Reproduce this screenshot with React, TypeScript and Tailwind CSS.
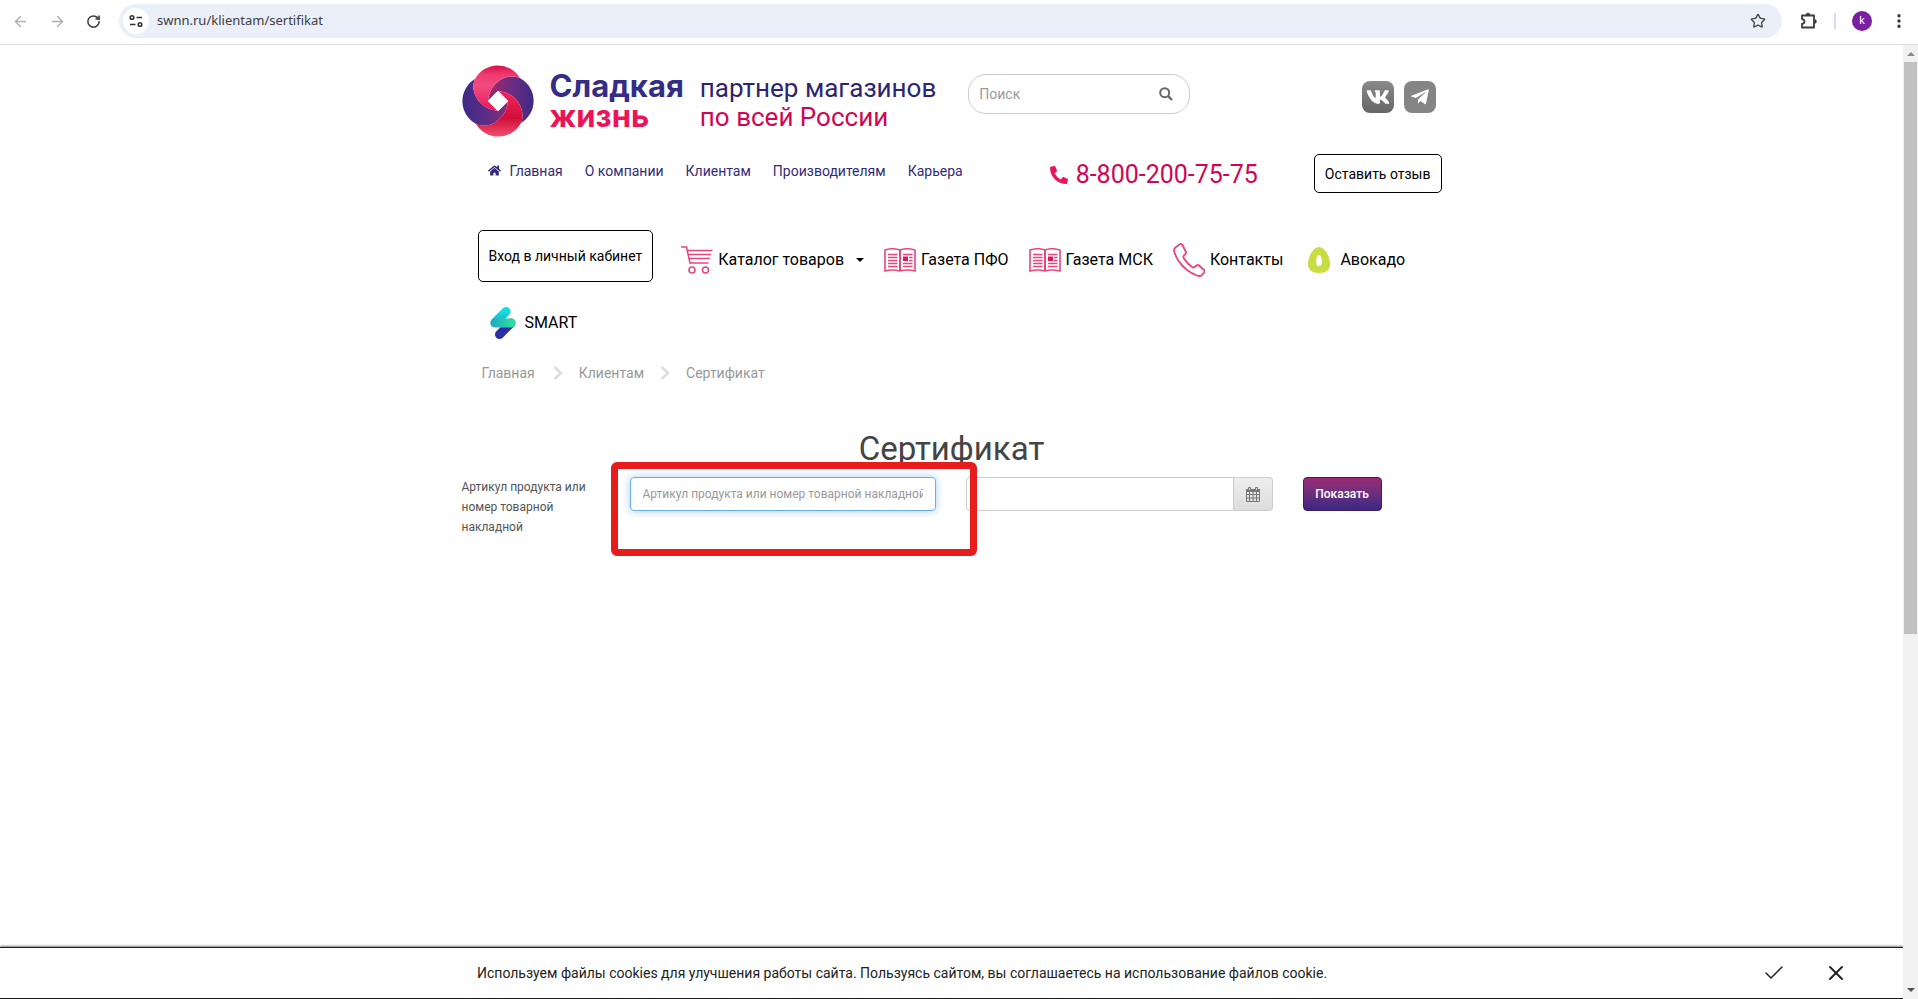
import React, { useState } from 'react';
import { ArrowLeft, ArrowRight, Check, MoreVertical, RotateCw, Star, X } from 'lucide-react';
import { FaHome, FaPhoneAlt, FaTelegramPlane, FaVk } from 'react-icons/fa';

const topLinks = ['О компании', 'Клиентам', 'Производителям', 'Карьера'];

// one petal, turned by 90° for each of the four colours
const petal = 'M78 109C82 50 140 22 175 40A78 78 0 0 1 177 176C195 141 167 83 108 79Z';

const LogoMark = () => (
  <svg viewBox="0 0 216 218" className="w-[72px] h-[72px]" aria-hidden="true">
    <defs>
      <linearGradient id="logoTop">
        <stop offset="0" stopColor="#ef1558" />
        <stop offset="0.55" stopColor="#f04c80" />
        <stop offset="0.8" stopColor="#ee3a70" />
        <stop offset="1" stopColor="#d80f4c" />
      </linearGradient>
      <linearGradient id="logoRight">
        <stop offset="0" stopColor="#a92668" />
        <stop offset="0.5" stopColor="#6d2c82" />
        <stop offset="1" stopColor="#3d2a85" />
      </linearGradient>
      <linearGradient id="logoBottom">
        <stop offset="0" stopColor="#f0245c" />
        <stop offset="0.3" stopColor="#e31a4c" />
        <stop offset="0.6" stopColor="#cf0f3a" />
        <stop offset="1" stopColor="#f0506f" />
      </linearGradient>
      <linearGradient id="logoLeft">
        <stop offset="0" stopColor="#8a2c7c" />
        <stop offset="0.5" stopColor="#5a2c86" />
        <stop offset="1" stopColor="#3d2a85" />
      </linearGradient>
    </defs>
    <path d={petal} fill="url(#logoRight)" />
    <path d={petal} fill="url(#logoBottom)" transform="rotate(90 108 109)" />
    <path d={petal} fill="url(#logoLeft)" transform="rotate(180 108 109)" />
    <path d={petal} fill="url(#logoTop)" transform="rotate(270 108 109)" />
    <path d="M108 78L139 109L108 140L77 109Z" fill="#fff" />
  </svg>
);

const SearchIcon = () => (
  <svg viewBox="0 0 14 14" className="w-[14px] h-[14px]" fill="none" stroke="#666" strokeWidth="2">
    <circle cx="5.7" cy="5.7" r="4.5" />
    <path d="M9 9L13 13" strokeWidth="2.4" />
  </svg>
);

const PuzzleIcon = () => (
  <svg viewBox="0 0 18 18" className="w-[18px] h-[18px]" fill="none" stroke="#3c3c3c" strokeWidth="1.8" strokeLinejoin="round">
    <path d="M2 3.500H14V15.500H2V12Q4.500 11.500 4.500 9.500T2 7Z" />
    <path d="M6 3Q6 1 8 1T10 3ZM14.500 7.500Q16.500 7.500 16.500 9.500T14.500 11.500Z" fill="#3c3c3c" strokeWidth="0.6" />
  </svg>
);

const CartIcon = () => (
  <svg viewBox="0 0 32 28" className="w-8 h-7" fill="none" stroke="#e8477c" strokeWidth="1.6">
    <path d="M0 1H5.5L9 17H27.5M31.500 4.500H6.500M7.500 8.500H30M8 12.500H29" />
    <circle cx="11" cy="24" r="3" />
    <circle cx="24.500" cy="24" r="3" />
  </svg>
);

const PaperIcon = () => (
  <svg viewBox="0 0 32 24" className="w-8 h-6" fill="none" stroke="#e8477c">
    <path d="M1 2Q9 -0.500 16 2Q23 -0.500 31 2V23Q23 21 16 23Q9 21 1 23Z" strokeWidth="1.600" />
    <path d="M16 2V23" strokeWidth="2" />
    <path
      d="M4 6.500H13.500M4 9.500H13.500M4 12.500H13.500M4 15.500H13.500M4 18.500H13.500M19 6.500H28.500M25 9.500H28.500M25 12.500H28.500M19 15.500H28.500M19 18.500H28.500"
      strokeWidth="1.4"
    />
    <path d="M19 8.500H24V13H19Z" fill="#e0165c" stroke="none" />
  </svg>
);

const ContactIcon = () => (
  <svg viewBox="0 0 32 34" className="w-8 h-[34px]" fill="none" stroke="#e8477c" strokeWidth="1.800">
    <path d="M3 4L7 1Q8.500 0.500 9.500 2L13 9Q13.500 10.500 12 11.500L10.500 13Q10 14 11 15.500Q14 20.500 19 24Q20.500 25 21.500 24L23.500 22.500Q25 21.500 26 22.500L31 27Q32 28 31 29.500L28.500 32.500Q27 33.500 24 32.500Q12 28 5 17Q1 10 1 7Q1 5.500 3 4Z" />
  </svg>
);

const AvocadoIcon = () => (
  <svg viewBox="0 0 22 28" className="w-[22px] h-7">
    <path d="M11 1C17 1 22 11 22 18C22 24 18 27 11 27S0 24 0 18C0 11 5 1 11 1Z" fill="#c9dd42" />
    <path d="M11 9C13 9 14 13 14 16C14 18.500 13 20 11 20S8 18.500 8 16C8 13 9 9 11 9Z" fill="#fff" />
  </svg>
);

const SmartIcon = () => (
  <svg viewBox="0 0 26 32" className="w-[26px] h-8" fill="none" strokeLinecap="round">
    <defs>
      <linearGradient id="smartTop" x1="0" y1="0" x2="0" y2="1">
        <stop offset="0" stopColor="#12e0dc" />
        <stop offset="1" stopColor="#1fa8c8" />
      </linearGradient>
      <linearGradient id="smartMid" x1="0" y1="0" x2="1" y2="0">
        <stop offset="0" stopColor="#20a8c6" />
        <stop offset="1" stopColor="#2fe49a" />
      </linearGradient>
    </defs>
    <path d="M9.500 27.500L21 16" stroke="#2b2fa5" strokeWidth="9" />
    <path d="M16 4.500L5 15.500" stroke="url(#smartTop)" strokeWidth="9" />
    <path d="M5 11.500H21Q25.500 12 25.500 16Q25 19 22 20.500H5Q0.500 20 0.500 16Q1 13 5 11.500Z" fill="url(#smartMid)" />
  </svg>
);

const CalendarIcon = () => (
  <svg viewBox="0 0 14 15" className="w-[14px] h-[15px]" fill="none" stroke="#777">
    <path d="M0.500 3V14.500H13.500V3M0.500 7.500H13.500M0.500 11H13.500M3.500 5V14.500M7 5V14.500M10.500 5V14.500" />
    <path d="M0 2H14V5H0Z" fill="#777" stroke="none" />
    <path d="M2.500 0.500H4.500V3.500H2.500ZM9.500 0.500H11.500V3.500H9.500Z" fill="#ddd" />
  </svg>
);

const Crumb = () => (
  <svg viewBox="0 0 10 14" className="w-[10px] h-[14px]" fill="none" stroke="#ddd" strokeWidth="2.500">
    <path d="M1.500 1L8 7L1.500 13" />
  </svg>
);

const BrowserBar = () => (
  <div className="flex items-center h-[45px] pb-[2px] px-[10px] bg-white border-b border-[#dedede] shrink-0">
    <button className="p-[2px] text-[#b0b0b0]" aria-label="Назад">
      <ArrowLeft size={17} />
    </button>
    <button className="p-[2px] ml-4 text-[#b0b0b0]" aria-label="Вперёд">
      <ArrowRight size={17} />
    </button>
    <button className="p-[2px] ml-4 text-[#3c3c3c]" aria-label="Обновить">
      <RotateCw size={15} strokeWidth={2.4} />
    </button>
    <div className="flex items-center flex-1 h-[34px] ml-4 pl-1 pr-4 rounded-full bg-[#ebeff9]">
      <span className="flex items-center justify-center w-[26px] h-[26px] bg-white rounded-full">
        <svg viewBox="0 0 14 14" className="w-[14px] h-[14px]" fill="none" stroke="#333" strokeWidth="1.600">
          <circle cx="3" cy="3.500" r="1.800" />
          <path d="M7.500 3.500H13M1 10.500H6.500" />
          <circle cx="11" cy="10.500" r="1.800" />
        </svg>
      </span>
      <input
        type="text"
        aria-label="Адрес"
        className="flex-1 ml-2 font-['Noto_Sans',sans-serif] text-[13px] text-[#3c4043] bg-transparent outline-none"
        defaultValue="swnn.ru/klientam/sertifikat"
      />
      <button className="text-[#444]" aria-label="В закладки">
        <Star size={16} />
      </button>
    </div>
    <button className="ml-[18px]" aria-label="Расширения">
      <PuzzleIcon />
    </button>
    <span className="w-[2px] h-4 ml-4 bg-[#d5dbf0]" />
    <button className="w-5 h-5 ml-4 text-[11px] text-white bg-[#7b1fa2] rounded-full">k</button>
    <button className="ml-[18px] text-[#333]" aria-label="Меню">
      <MoreVertical size={18} strokeWidth={2.4} />
    </button>
  </div>
);

const Header = () => (
  <header>
    <div className="flex items-start pt-5">
      <a href="#" className="flex items-center">
        <LogoMark />
        <span className="ml-4 font-['Inter',sans-serif] text-[31px] leading-[30px] font-bold">
          <span className="block text-[#352c85]">Сладкая</span>
          <span className="block text-[#ec1458]">жизнь</span>
        </span>
      </a>
      <p className="ml-4 pt-[9px] text-[26px] leading-[29px] text-[#2d2570]">
        партнер магазинов
        <span className="block text-[#cf0653]">по всей России</span>
      </p>
      <form className="flex items-center w-[222px] h-10 mt-[9px] ml-8 pl-[10px] pr-4 border border-[#ccc] rounded-[18px]">
        <input
          type="text"
          placeholder="Поиск"
          aria-label="Поиск"
          className="flex-1 min-w-0 text-sm outline-none placeholder:text-[#999]"
        />
        <button type="button" aria-label="Найти">
          <SearchIcon />
        </button>
      </form>
      <div className="flex gap-[10px] mt-4 ml-auto mr-[6px]">
        <a href="#" aria-label="VK" className="flex items-center justify-center w-8 h-8 text-white rounded-lg bg-gradient-to-b from-[#8a8a8a] to-[#666]">
          <FaVk size={24} />
        </a>
        <a href="#" aria-label="Telegram" className="flex items-center justify-center w-8 h-8 text-white rounded-lg bg-[#858585]">
          <FaTelegramPlane size={20} />
        </a>
      </div>
    </div>

    <div className="flex items-center mt-[17px]">
      <nav className="flex items-center gap-[22px] pb-[6px] pl-[26px] text-sm text-[#342a78]">
        <a href="#" className="flex items-center gap-[9px]">
          <FaHome size={13} />
          Главная
        </a>
        {topLinks.map((link) => (
          <a key={link} href="#">{link}</a>
        ))}
      </nav>
      <a href="tel:88002007575" className="flex items-center gap-2 pt-[2px] ml-auto text-[25px] leading-[30px] text-[#cf0653]">
        <FaPhoneAlt size={18} className="text-[#ec1458]" />
        8-800-200-75-75
      </a>
      <button className="px-[10px] h-[39px] ml-14 text-sm text-black border border-black rounded-[5px]">
        Оставить отзыв
      </button>
    </div>

    <nav className="flex flex-wrap items-center mt-[37px] text-base text-black">
      <button className="px-[10px] h-[52px] ml-4 text-sm border border-black rounded-[5px]">
        Вход в личный кабинет
      </button>
      <a href="#" className="flex items-center gap-[5px] ml-7 pt-2">
        <CartIcon />
        Каталог товаров
        <span className="w-0 h-0 ml-[7px] border-x-4 border-t-4 border-x-transparent border-t-black" />
      </a>
      <a href="#" className="flex items-center gap-[5px] ml-5 pt-2">
        <PaperIcon />
        Газета ПФО
      </a>
      <a href="#" className="flex items-center gap-[5px] ml-5 pt-2">
        <PaperIcon />
        Газета МСК
      </a>
      <a href="#" className="flex items-center gap-[5px] ml-5 pt-2">
        <ContactIcon />
        Контакты
      </a>
      <a href="#" className="flex items-center gap-[10px] ml-[25px] pt-2">
        <AvocadoIcon />
        Авокадо
      </a>
      <a href="#" className="flex items-center gap-[9px] mt-[25px] ml-7">
        <SmartIcon />
        SMART
      </a>
    </nav>
  </header>
);

const CertificateForm = () => {
  const [article, setArticle] = useState('');
  const [date, setDate] = useState('');

  return (
    <form className="relative flex items-start mt-2 text-xs" onSubmit={(e) => e.preventDefault()}>
      <label htmlFor="article" className="w-[139px] mr-[29px] leading-5 text-[#555]">
        Артикул продукта или номер товарной накладной
      </label>
      <input
        id="article"
        type="text"
        value={article}
        onChange={(e) => setArticle(e.target.value)}
        placeholder="Артикул продукта или номер товарной накладной"
        className="w-[306px] h-[34px] px-3 border border-[#66afe9] rounded outline-none shadow-[0_0_8px_rgba(102,175,233,0.6)] placeholder:text-[#999]"
      />
      <div className="flex w-[307px] h-[34px] ml-[30px]">
        <input
          type="text"
          aria-label="Дата"
          value={date}
          onChange={(e) => setDate(e.target.value)}
          className="flex-1 min-w-0 px-3 border border-[#ccc] rounded-l outline-none"
        />
        <button
          type="button"
          aria-label="Календарь"
          className="flex items-center justify-center w-[39px] border border-l-0 border-[#ccc] rounded-r bg-gradient-to-b from-[#eee] to-[#ddd]"
        >
          <CalendarIcon />
        </button>
      </div>
      <button
        type="submit"
        className="w-[79px] h-[34px] ml-[30px] font-medium text-white border border-[#3b1f6c] rounded bg-gradient-to-b from-[#9b2a74] to-[#3a2584]"
      >
        Показать
      </button>
      {/* highlight around the article field */}
      <div className="absolute -top-[15px] left-[149px] w-[366px] h-[94px] border-[7px] border-[#e71c1c] rounded-md pointer-events-none" />
    </form>
  );
};

const CookieBar = () => (
  <div className="flex items-center h-[52px] pl-[477px] pr-[55px] bg-white border-y border-[#1c1c1c] text-sm text-[#222] shadow-[0_-1px_2px_rgba(0,0,0,0.5)] shrink-0">
    <p className="flex-1">
      Используем файлы cookies для улучшения работы сайта. Пользуясь сайтом, вы соглашаетесь на использование файлов cookie.
    </p>
    <button aria-label="Принять">
      <Check size={24} strokeWidth={1.5} />
    </button>
    <button className="ml-[38px]" aria-label="Закрыть">
      <X size={24} strokeWidth={2} />
    </button>
  </div>
);

const App = () => (
  <div className="flex flex-col h-screen overflow-hidden bg-white font-['Roboto',sans-serif]">
    <BrowserBar />
    <div className="flex flex-1 min-h-0">
      <div className="flex flex-col flex-1 min-w-0">
        <main className="flex-1 w-full max-w-[980px] mx-auto">
          <Header />
          <nav className="flex items-center mt-6 pl-5 text-sm text-[#999]">
            <a href="#">Главная</a>
            <span className="ml-[18px] mr-4"><Crumb /></span>
            <a href="#">Клиентам</a>
            <span className="mx-4"><Crumb /></span>
            <span>Сертификат</span>
          </nav>
          <h1 className="mt-[46px] text-[33px] leading-10 text-center text-[#444]">Сертификат</h1>
          <CertificateForm />
        </main>
        <CookieBar />
      </div>
      <div className="flex flex-col items-center w-[15px] bg-[#f1f1f1] shrink-0">
        <span className="w-0 h-0 mt-[7px] mb-[6px] border-x-4 border-b-4 border-x-transparent border-b-[#8a8a8a]" />
        <span className="w-[13px] h-[60%] bg-[#c1c1c1]" />
        <span className="w-0 h-0 mt-auto mb-[7px] border-x-4 border-t-4 border-x-transparent border-t-[#505050]" />
      </div>
    </div>
  </div>
);

export default App;
